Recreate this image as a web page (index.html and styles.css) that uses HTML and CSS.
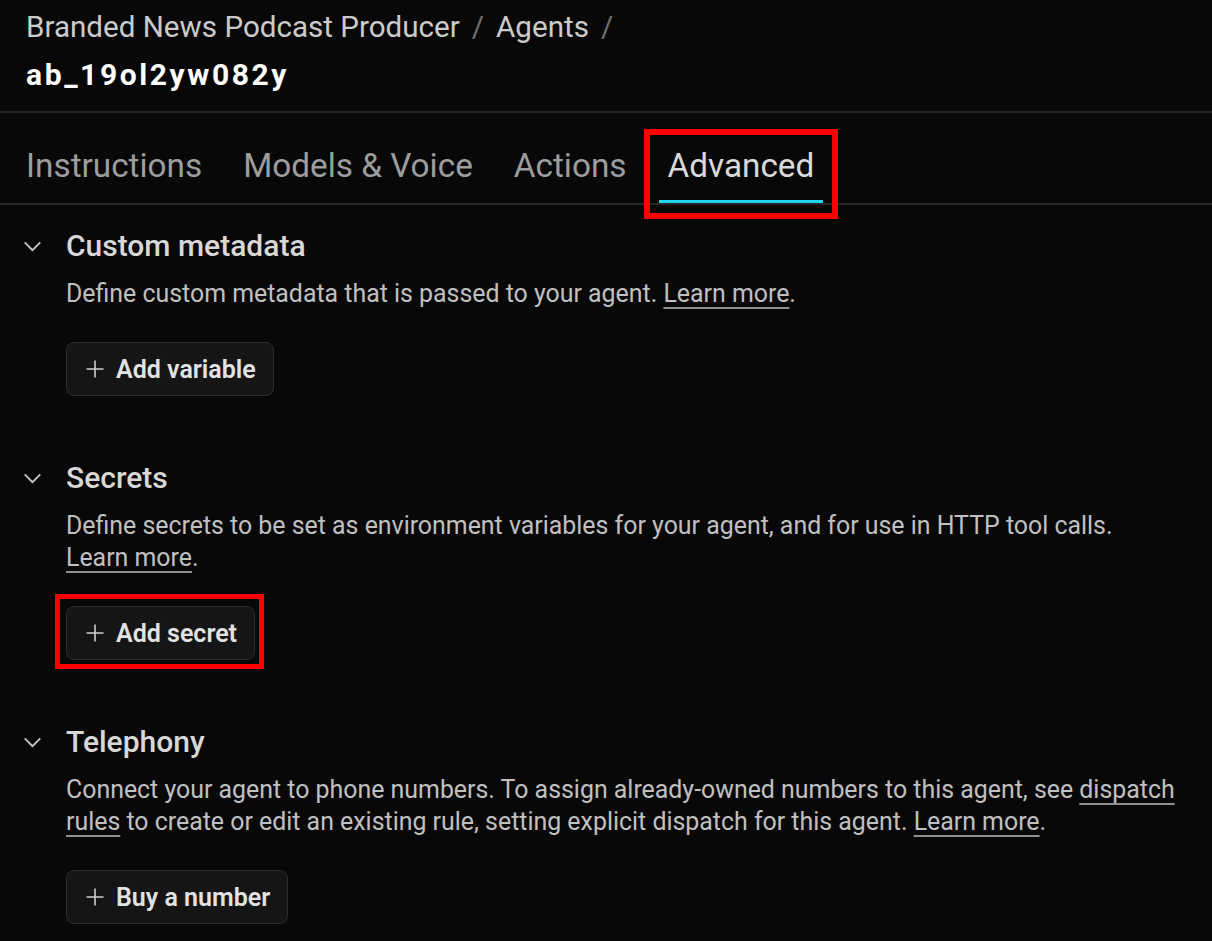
FILE: index.html
```html
<!DOCTYPE html>
<html lang="en">

<head>
    <meta charset="UTF-8">
    <meta name="viewport" content="width=device-width, initial-scale=1.0">
    <title>ab_19ol2yw082y · Agents</title>
    <link rel="stylesheet" href="styles.css">
</head>

<body>

    <header class="page-header">
        <nav class="crumbs">
            <span>Branded News Podcast Producer</span>
            <span class="sep">/</span>
            <span>Agents</span>
            <span class="sep">/</span>
        </nav>
        <h1 class="agent-id">ab_19ol2yw082y</h1>
    </header>

    <div class="tabs">
        <div class="tab">Instructions</div>
        <div class="tab">Models &amp; Voice</div>
        <div class="tab">Actions</div>
        <div class="tab active marked">Advanced</div>
    </div>

    <main class="panel">

        <section class="block">
            <div class="block-head">
                <svg class="chevron" viewBox="0 0 20 12"><polyline points="1.5,1.5 10,10 18.5,1.5" /></svg>
                <h2>Custom metadata</h2>
            </div>
            <p class="block-text">Define custom metadata that is passed to your agent. <a href="#" class="more">Learn more</a>.</p>
            <button class="add-btn">
                <svg class="plus" viewBox="0 0 18 18"><path d="M9 0.5v17M0.5 9h17" /></svg>
                Add variable
            </button>
        </section>

        <section class="block">
            <div class="block-head">
                <svg class="chevron" viewBox="0 0 20 12"><polyline points="1.5,1.5 10,10 18.5,1.5" /></svg>
                <h2>Secrets</h2>
            </div>
            <p class="block-text">Define secrets to be set as environment variables for your agent, and for use in HTTP tool calls. <a href="#" class="more">Learn more</a>.</p>
            <button class="add-btn marked">
                <svg class="plus" viewBox="0 0 18 18"><path d="M9 0.5v17M0.5 9h17" /></svg>
                Add secret
            </button>
        </section>

        <section class="block">
            <div class="block-head">
                <svg class="chevron" viewBox="0 0 20 12"><polyline points="1.5,1.5 10,10 18.5,1.5" /></svg>
                <h2>Telephony</h2>
            </div>
            <p class="block-text">Connect your agent to phone numbers. To assign already-owned numbers to this agent, see <a href="#">dispatch</a> <a href="#">rules</a> to create or edit an existing rule, setting explicit dispatch for this agent. <a href="#" class="more">Learn more</a>.</p>
            <button class="add-btn">
                <svg class="plus" viewBox="0 0 18 18"><path d="M9 0.5v17M0.5 9h17" /></svg>
                Buy a number
            </button>
        </section>

    </main>

</body>

</html>
```
FILE: styles.css
```css
body {
    margin: 0;
    background-color: #080808;
    font-family: Roboto, "Liberation Sans", sans-serif;
    color: #bdbdbd;
}

/* header */

.page-header {
    padding: 9px 26px 18px;
    border-bottom: 2px solid #222;
}

.crumbs {
    display: flex;
    gap: 12px;
    font-size: 29.6px;
    line-height: 36px;
    color: #cbcbcb;
}

.crumbs .sep {
    color: #6f6f6f;
}

.agent-id {
    margin: 12px 0 0;
    font-size: 30px;
    line-height: 36px;
    font-weight: 700;
    letter-spacing: 2.6px;
    color: #fff;
}

/* tabs */

.tabs {
    display: flex;
    gap: 23px;
    padding-left: 17px;
    border-bottom: 2px solid #262626;
}

.tab {
    position: relative;
    padding: 33px 9px 14px;
    font-size: 33.3px;
    line-height: 40px;
    color: #9d9d9d;
    border-bottom: 3px solid transparent;
}

.tab.active {
    color: #dadada;
    border-bottom-color: #22d3f0;
}

/* red annotation frames */

.tab.marked::after,
.add-btn.marked::after {
    content: "";
    position: absolute;
    border: 6px solid #ff0000;
}

.tab.marked::after {
    left: -15px;
    right: -15px;
    top: 16px;
    bottom: -19px;
}

.add-btn.marked::after {
    left: -12px;
    right: -10px;
    top: -13px;
    bottom: -10px;
    border-width: 5px;
}

/* sections */

.panel {
    padding: 21px 22px 0 23px;
}

.block {
    margin-bottom: 62px;
}

.block-head {
    display: flex;
    align-items: center;
    gap: 24px;
}

.chevron {
    width: 19px;
    height: 11px;
    fill: none;
    stroke: #c8c8c8;
    stroke-width: 2;
}

.block-head h2 {
    margin: 0;
    font-size: 30px;
    line-height: 40px;
    font-weight: 500;
    color: #d8d8d8;
}

.block-text {
    margin: 12px 0 0 43px;
    font-size: 24.9px;
    line-height: 32px;
    color: #c0c0c0;
}

.block-text a {
    color: #c0c0c0;
    text-decoration: underline;
    text-decoration-color: #8e8e8e;
    text-decoration-thickness: 2px;
    text-underline-offset: 5px;
}

.block-text a.more {
    white-space: nowrap;
}

.add-btn {
    position: relative;
    display: inline-flex;
    align-items: center;
    gap: 12px;
    height: 54px;
    margin: 32px 0 0 43px;
    padding: 0 17px 0 19px;
    background-color: #151515;
    border: 1px solid #2c2c2c;
    border-radius: 8px;
    font-family: inherit;
    font-size: 25px;
    font-weight: 600;
    color: #e2e2e2;
}

.plus {
    width: 18px;
    height: 18px;
    fill: none;
    stroke: #cfcfcf;
    stroke-width: 1.6;
}
```
